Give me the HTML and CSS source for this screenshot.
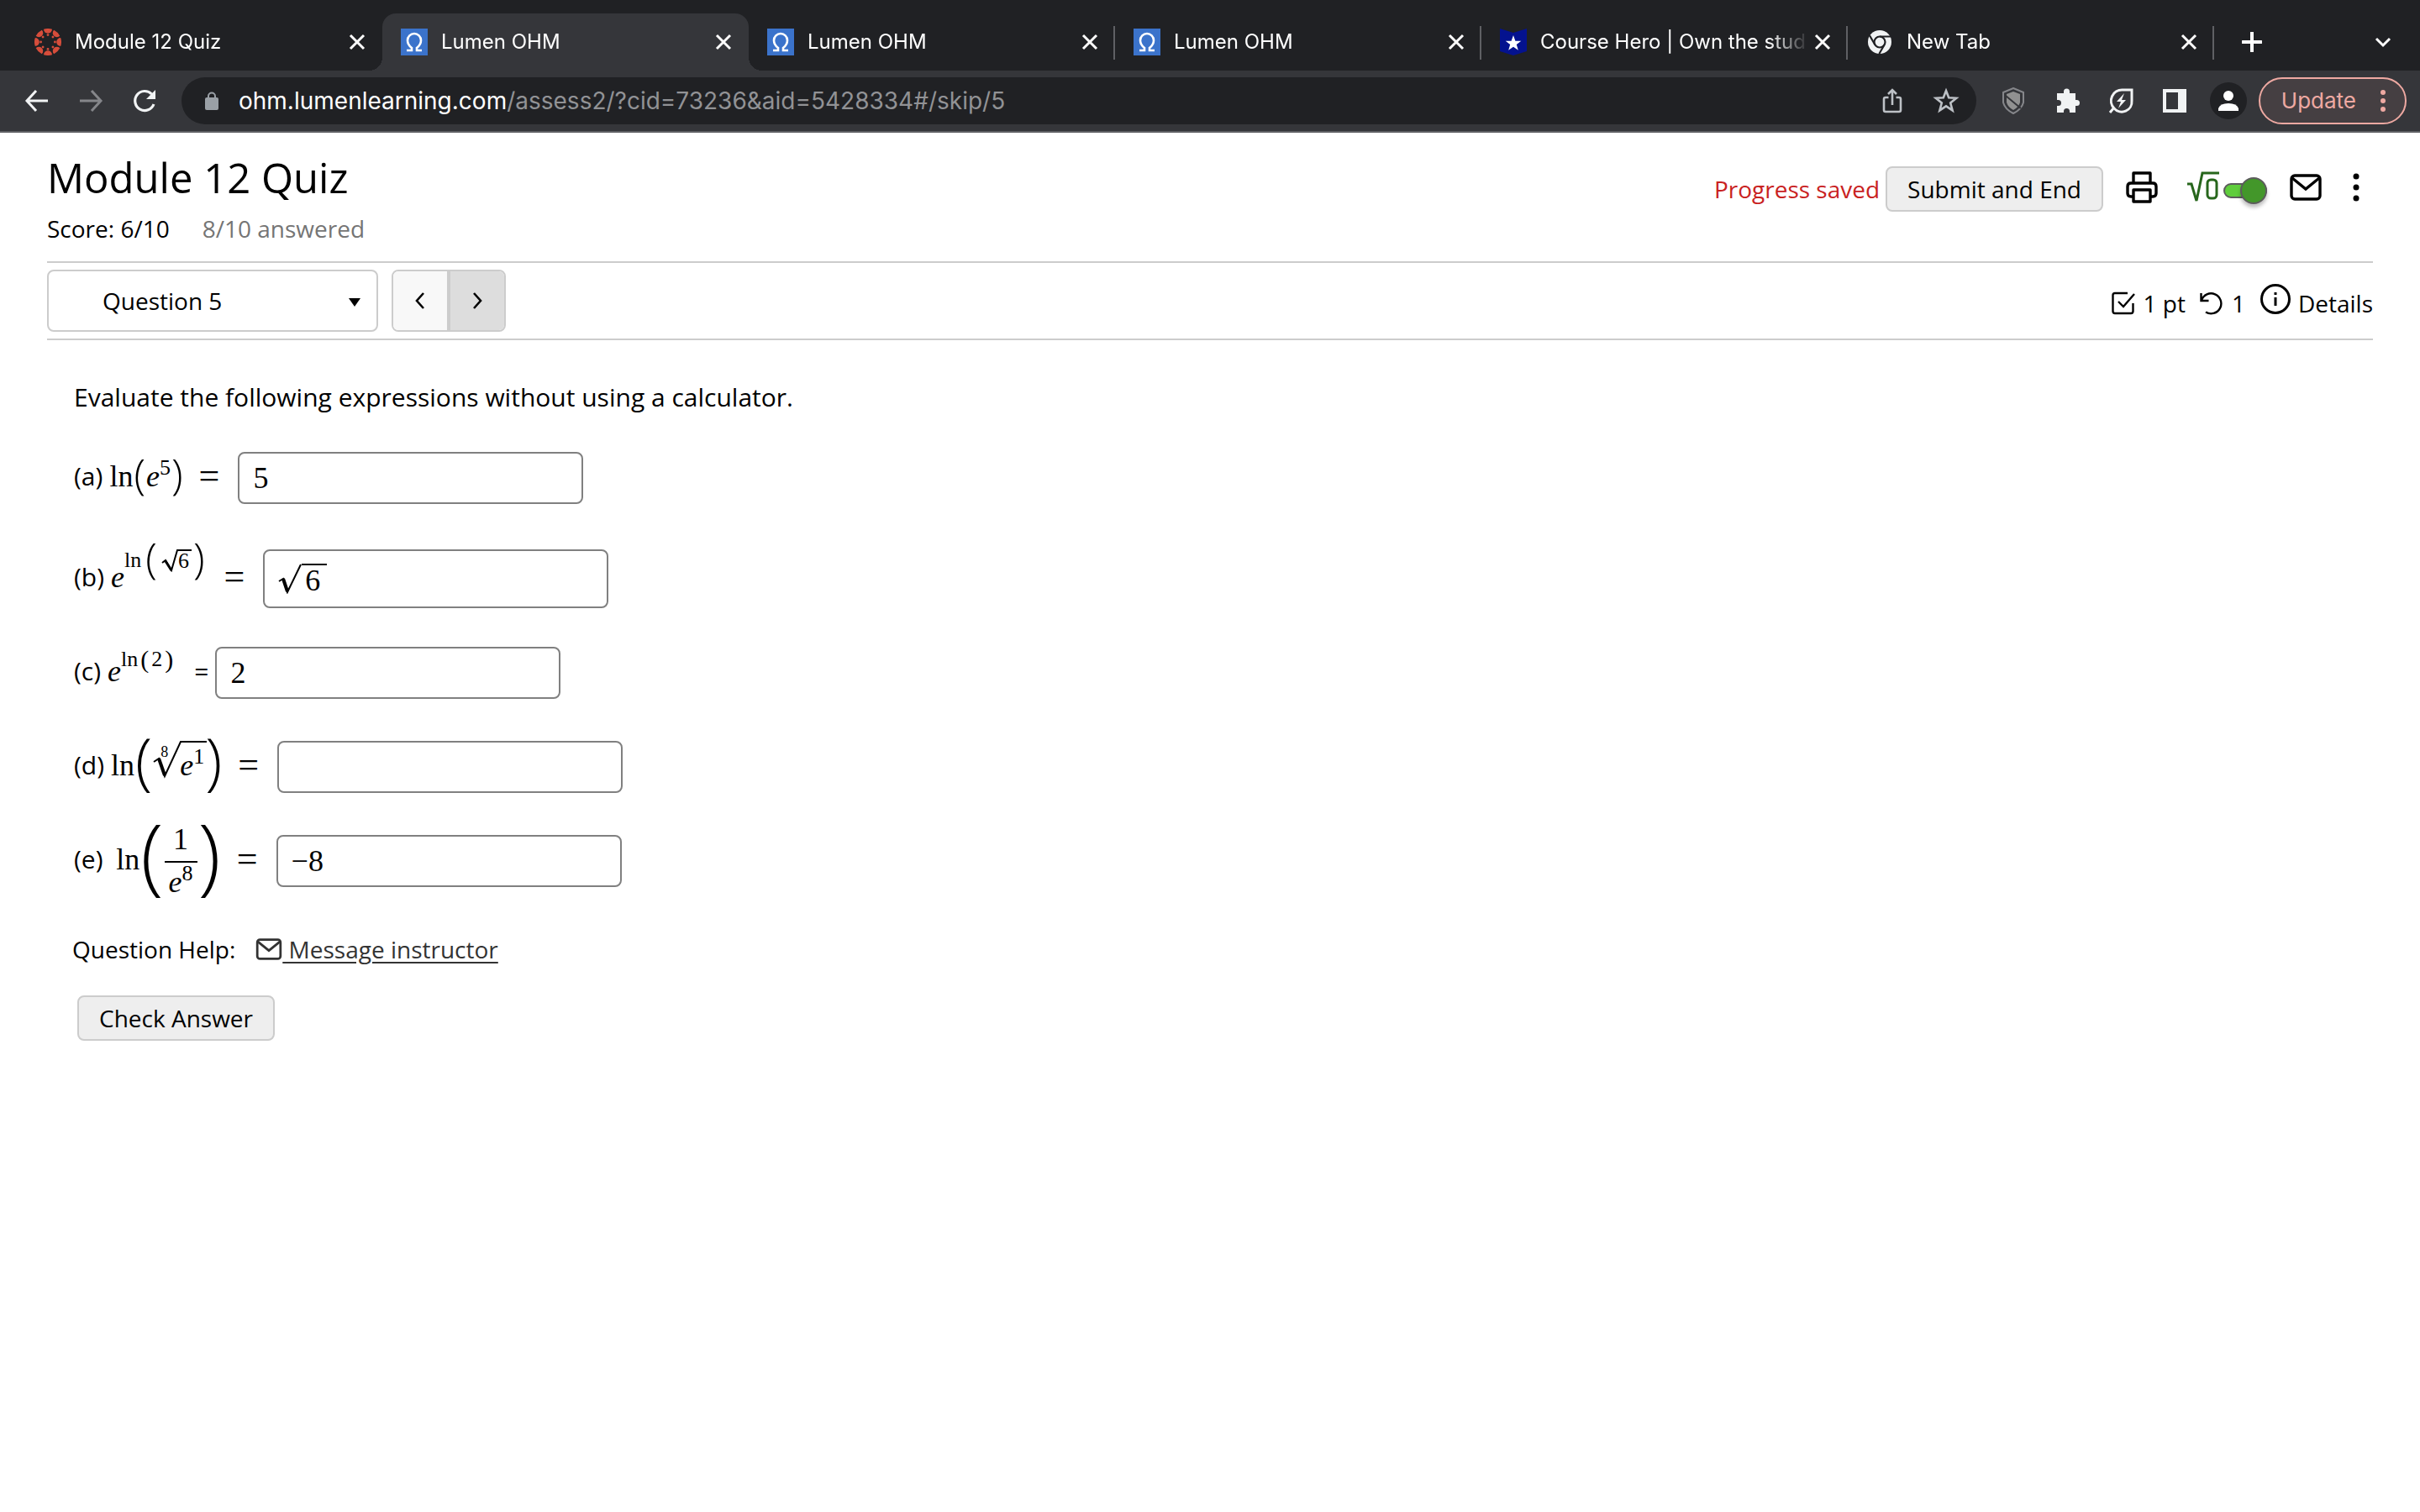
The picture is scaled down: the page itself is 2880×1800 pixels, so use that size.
FILE: index.html
```html
<!DOCTYPE html>
<html lang="en">
    <head>
        <meta charset="UTF-8">
        <meta name="viewport" content="width=device-width, initial-scale=1.0">
        <title>Lumen OHM</title>
        <link rel="stylesheet" href="styles.css">
    </head>
    <body>
        <!-- shared icon shapes -->
        <svg class="defs" width="0" height="0" aria-hidden="true">
            <symbol id="close" viewBox="0 0 20 20">
                <path d="M2 2l16 16M18 2L2 18" fill="none" stroke="#fff" stroke-width="3"/>
            </symbol>
            <symbol id="omega" viewBox="0 0 32 32">
                <rect width="32" height="32" fill="#3b73cb"/>
                <path d="M7 26h6v-3C9 20 8 17 8 14a8 8 0 0 1 16 0c0 3-1 6-5 9v3h6" fill="none" stroke="#fff" stroke-width="2.6"/>
            </symbol>
            <symbol id="mail" viewBox="0 0 38 32">
                <rect x="2" y="2" width="34" height="28" rx="4" fill="none" stroke="currentColor" stroke-width="3.4"/>
                <path d="M3 5l16 13L35 5" fill="none" stroke="currentColor" stroke-width="3.4"/>
            </symbol>
        </svg>

        <div class="browser">
            <div class="tab-strip">
                <div class="tab">
                    <svg class="favicon" viewBox="-16 -16 32 32" fill="#d64d3b">
                        <g id="petals">
                            <path d="M-5-15.2A16 16 0 0 1 5-15.2A5 5 0 0 1-5-15.2z"/>
                            <circle cy="-8.4" r="1.4"/>
                        </g>
                        <use href="#petals" transform="rotate(45)"/>
                        <use href="#petals" transform="rotate(90)"/>
                        <use href="#petals" transform="rotate(135)"/>
                        <use href="#petals" transform="rotate(180)"/>
                        <use href="#petals" transform="rotate(225)"/>
                        <use href="#petals" transform="rotate(270)"/>
                        <use href="#petals" transform="rotate(315)"/>
                    </svg>
                    <span class="tab-title">Module 12 Quiz</span>
                    <button class="tab-close" aria-label="Close tab"><svg><use href="#close"/></svg></button>
                </div>
                <div class="tab active">
                    <svg class="favicon"><use href="#omega"/></svg>
                    <span class="tab-title">Lumen OHM</span>
                    <button class="tab-close" aria-label="Close tab"><svg><use href="#close"/></svg></button>
                </div>
                <div class="tab divided">
                    <svg class="favicon"><use href="#omega"/></svg>
                    <span class="tab-title">Lumen OHM</span>
                    <button class="tab-close" aria-label="Close tab"><svg><use href="#close"/></svg></button>
                </div>
                <div class="tab divided">
                    <svg class="favicon"><use href="#omega"/></svg>
                    <span class="tab-title">Lumen OHM</span>
                    <button class="tab-close" aria-label="Close tab"><svg><use href="#close"/></svg></button>
                </div>
                <div class="tab divided">
                    <svg class="favicon" viewBox="0 0 32 32">
                        <path d="M0 0l16 5 16-5v27l-16 5-16-5z" fill="#04128f"/>
                        <path d="M16 8l2.400 6.700h6.900l-5.500 4.200 2 6.800-5.800-4-5.800 4 2-6.800-5.500-4.200h6.900z" fill="#fff"/>
                    </svg>
                    <span class="tab-title">Course Hero | Own the stud</span>
                    <button class="tab-close" aria-label="Close tab"><svg><use href="#close"/></svg></button>
                </div>
                <div class="tab divided">
                    <svg class="favicon" viewBox="0 0 32 32">
                        <circle cx="16" cy="16" r="14" fill="#f1f3f4"/>
                        <circle cx="16" cy="16" r="6.500" fill="none" stroke="#202124" stroke-width="2.200"/>
                        <path d="M16 9.500h13M10.400 19.300L4 8.200M21.600 19.300L15.400 30" stroke="#202124" stroke-width="2.200"/>
                    </svg>
                    <span class="tab-title">New Tab</span>
                    <button class="tab-close" aria-label="Close tab"><svg><use href="#close"/></svg></button>
                </div>
                <button class="new-tab" aria-label="New tab">
                    <svg viewBox="0 0 24 24"><path d="M12 1v22M1 12h22" stroke="#fff" stroke-width="4" stroke-linecap="round"/></svg>
                </button>
                <button class="tab-search" aria-label="Search tabs">
                    <svg viewBox="0 0 20 20"><path d="M2 6l8 8 8-8" fill="none" stroke="#fff" stroke-width="3"/></svg>
                </button>
            </div>

            <div class="toolbar">
                <button class="tool" aria-label="Back">
                    <svg viewBox="0 0 32 32"><path d="M29 16H4M15 4L4 16l11 12" fill="none" stroke="#f1f3f4" stroke-width="3"/></svg>
                </button>
                <button class="tool" aria-label="Forward">
                    <svg viewBox="0 0 32 32"><path d="M3 16h25M17 4l11 12-11 12" fill="none" stroke="#85868a" stroke-width="3"/></svg>
                </button>
                <button class="tool" aria-label="Reload">
                    <svg viewBox="0 0 32 32"><path d="M27 20a11.500 11.500 0 1 1-2.500-12" fill="none" stroke="#f1f3f4" stroke-width="3.200"/><path d="M29 3v11H18z" fill="#f1f3f4"/></svg>
                </button>
                <div class="address">
                    <svg class="lock" viewBox="0 0 16 22"><path d="M4 9V5.500a4 4 0 0 1 8 0V9" fill="none" stroke="#9aa0a6" stroke-width="2"/><rect y="7" width="16" height="15" rx="2" fill="#9aa0a6"/></svg>
                    <div class="url">ohm.lumenlearning.com<span>/assess2/?cid=73236&amp;aid=5428334#/skip/5</span></div>
                    <button class="tool" aria-label="Share">
                        <svg viewBox="0 0 32 32"><path d="M11.500 12H8q-2 0-2 2v13q0 2 2 2h16q2 0 2-2V14q0-2-2-2h-3.500M16 21V4M11 8l5-5 5 5" fill="none" stroke="#bdc1c6" stroke-width="2.600"/></svg>
                    </button>
                    <button class="tool" aria-label="Bookmark">
                        <svg viewBox="0 0 32 32"><path d="M16 4l3.200 8.300 9 .5-7 5.700 2.400 8.900L16 22.300l-7.600 5.100 2.400-8.900-7-5.700 9-.5z" fill="none" stroke="#bdc1c6" stroke-width="2.600"/></svg>
                    </button>
                </div>
                <div class="extensions">
                    <button class="tool" aria-label="Shield">
                        <svg viewBox="0 0 32 32"><path d="M16 1l12 5v12q-2 8-12 13Q6 26 4 18V6z" fill="none" stroke="#85868a" stroke-width="2"/><path d="M16 5l8 3v10q-2 6-8 9-6-3-8-9V8z" fill="#919191"/><path d="M7 10l18 15" stroke="#35363a" stroke-width="2"/></svg>
                    </button>
                    <button class="tool" aria-label="Extensions">
                        <svg viewBox="0 0 32 32"><path d="M4 7h8V5a3.500 3.500 0 0 1 7 0v2h7v8h1.500a3.500 3.500 0 0 1 0 7H26v8h-7v-1.500a3.500 3.500 0 0 0-7 0V30H4v-8h1.500a3.500 3.500 0 0 0 0-7H4z" fill="#f1f3f4"/></svg>
                    </button>
                    <button class="tool" aria-label="Energy saver">
                        <svg viewBox="0 0 32 32"><path d="M29 3H18A13 13 0 0 0 8 25a12 12 0 0 0 21-9zM8 24l-5 6" fill="none" stroke="#f1f3f4" stroke-width="3"/><path d="M20 7l-9 10h5l-3 8 9-10h-5z" fill="#f1f3f4"/></svg>
                    </button>
                    <button class="tool" aria-label="Side panel">
                        <svg viewBox="0 0 32 32"><path d="M2 2h28v28H2zM6 6v20h14V6z" fill="#f1f3f4" fill-rule="evenodd"/></svg>
                    </button>
                    <button class="tool profile" aria-label="Profile">
                        <svg viewBox="0 0 44 44"><circle cx="22" cy="22" r="22" fill="#202124"/><circle cx="22" cy="16" r="6" fill="#fff"/><path d="M10 34v-3q2-6 12-6t12 6v3z" fill="#fff"/></svg>
                    </button>
                </div>
                <button class="update">
                    Update
                    <svg viewBox="0 0 8 28" fill="#eea9a2"><circle cx="4" cy="4" r="3"/><circle cx="4" cy="14" r="3"/><circle cx="4" cy="24" r="3"/></svg>
                </button>
            </div>
        </div>

        <div class="page">
            <header class="quiz-header">
                <div>
                    <h1>Module 12 Quiz</h1>
                    <div class="score">
                        <span>Score: 6/10</span>
                        <span class="answered">8/10 answered</span>
                    </div>
                </div>
                <div class="header-actions">
                    <span class="saved">Progress saved</span>
                    <button class="button">Submit and End</button>
                    <button class="icon-button print" aria-label="Print">
                        <svg viewBox="0 0 38 38" fill="none" stroke="#000" stroke-width="3.400" stroke-linejoin="round"><path d="M9 14V2h20v12M9 30H6q-4 0-4-4v-8q0-4 4-4h26q4 0 4 4v8q0 4-4 4h-3"/><path d="M9 22h20v14H9z"/></svg>
                    </button>
                    <label class="equation-toggle" aria-label="Equation editor">
                        <svg viewBox="0 0 38 38" fill="none" stroke="#27661c" stroke-width="3"><path d="M0 15h5l6 20L18 2h20"/><rect x="24" y="10" width="11" height="22" rx="4"/></svg>
                        <input type="checkbox" checked>
                    </label>
                    <button class="icon-button message" aria-label="Messages"><svg><use href="#mail"/></svg></button>
                    <button class="icon-button more" aria-label="More options">
                        <svg viewBox="0 0 8 36"><circle cx="4" cy="5" r="3.500"/><circle cx="4" cy="18" r="3.500"/><circle cx="4" cy="31" r="3.500"/></svg>
                    </button>
                </div>
            </header>

            <nav class="question-nav">
                <div class="question-select">
                    <select aria-label="Question">
                        <option>Question 5</option>
                    </select>
                    <svg viewBox="0 0 16 12"><path d="M1 1h14l-7 10z"/></svg>
                </div>
                <div class="pager">
                    <button aria-label="Previous question"><svg viewBox="0 0 12 20"><path d="M10 1L2 10l8 9" fill="none" stroke="#000" stroke-width="2.600"/></svg></button>
                    <button class="next" aria-label="Next question"><svg viewBox="0 0 12 20"><path d="M2 1l8 9-8 9" fill="none" stroke="#000" stroke-width="2.600"/></svg></button>
                </div>
                <div class="question-info">
                    <svg class="small" viewBox="0 0 28 28" fill="none" stroke="#000" stroke-width="2.400"><path d="M19 2H4Q1.500 2 1.500 4.500v19Q1.500 26 4 26h19q2.500 0 2.500-2.500V14M8 12l6 6L27 3"/></svg>
                    <span>1 pt</span>
                    <svg class="small" viewBox="0 0 28 28" fill="none" stroke="#000" stroke-width="2.400"><path d="M1.500 2v9h9M2 10.500A12 12 0 1 1 7 24.500"/></svg>
                    <span>1</span>
                    <button class="details">
                        <svg viewBox="0 0 38 38" fill="none" stroke="#000" stroke-width="3"><circle cx="19" cy="19" r="16.500"/><path d="M19 17v10M19 11v3"/></svg>
                        Details
                    </button>
                </div>
            </nav>

            <main class="question">
                <p class="prompt">Evaluate the following expressions without using a calculator.</p>

                <div class="parts">
                    <div class="part">
                        <label for="answer-a">(a) <span class="math"><span>ln</span><span class="paren">(</span><i>e</i><sup>5</sup><span class="paren">)</span><span class="equals">=</span></span></label>
                        <input id="answer-a" class="answer" type="text" value="5">
                    </div>

                    <div class="part">
                        <label for="answer-b">(b) <span class="math"><i>e</i><span class="exponent high"><span>ln</span><span class="paren">(</span><svg class="radical" viewBox="0 0 36 28"><path d="M1 17l4-3 7 12L19 2h17" fill="none" stroke="#000" stroke-width="2"/><path d="M5 15l7 11" stroke="#000" stroke-width="3"/></svg><span class="radicand">6</span><span class="paren">)</span></span><span class="equals">=</span></span></label>
                        <div class="answer root-answer">
                            <svg viewBox="0 0 28 36"><path d="M1 21l5-3 5 16L27 1" fill="none" stroke="#000" stroke-width="2"/><path d="M6 18l5 15" stroke="#000" stroke-width="4"/></svg>
                            <input id="answer-b" type="text" value="6">
                        </div>
                    </div>

                    <div class="part">
                        <label for="answer-c">(c) <span class="math"><i>e</i><span class="exponent"><span>ln</span><span class="thin">(</span><span>2</span><span class="thin">)</span></span></span><span class="plain-equals">=</span></label>
                        <input id="answer-c" class="answer" type="text" value="2">
                    </div>

                    <div class="part">
                        <label for="answer-d">(d) <span class="math"><span>ln</span><span class="paren medium">(</span><span class="root"><svg viewBox="0 0 64 46"><path d="M1 26l6-4 7 21L33 2h31" fill="none" stroke="#000" stroke-width="2"/><path d="M7 22l7 20" stroke="#000" stroke-width="4"/></svg><small>8</small><i>e</i><sup>1</sup></span><span class="paren medium">)</span><span class="equals">=</span></span></label>
                        <input id="answer-d" class="answer" type="text">
                    </div>

                    <div class="part">
                        <label for="answer-e">(e)&nbsp; <span class="math"><span>ln</span><span class="paren large">(</span><span class="fraction"><span class="top">1</span><span class="bottom"><i>e</i><sup>8</sup></span></span><span class="paren large">)</span><span class="equals">=</span></span></label>
                        <input id="answer-e" class="answer" type="text" value="−8">
                    </div>
                </div>

                <div class="help">
                    <span>Question Help:</span>
                    <a href="#message"><svg><use href="#mail"/></svg>&nbsp;Message instructor</a>
                </div>

                <button class="button check">Check Answer</button>
            </main>
        </div>
    </body>
</html>
```
FILE: styles.css
```css
* {
    box-sizing: border-box;
}

body {
    margin: 0;
    background-color: #fff;
    color: #000;
    font-family: "Open Sans", "Noto Sans", sans-serif;
    font-size: 28px;
    line-height: 40px;
}

button {
    padding: 0;
    border: none;
    background: none;
    color: inherit;
    font: inherit;
    cursor: pointer;
}

svg {
    display: block;
    flex: none;
}

.defs {
    position: absolute;
}

/* Browser window */

.browser {
    background-color: #202124;
    border-bottom: 2px solid #5f6064;
    color: #fff;
    font-family: Inter, "Liberation Sans", sans-serif;
}

.tab-strip {
    display: flex;
    align-items: flex-end;
    height: 84px;
    padding-left: 19px;
}

.tab {
    position: relative;
    display: flex;
    align-items: center;
    flex: 0 1 436px;
    min-width: 0;
    height: 68px;
    padding: 0 20px 0 22px;
    font-size: 24px;
}

.tab.active {
    background-color: #35363a;
    border-radius: 16px 16px 0 0;
}

.tab.active::before,
.tab.active::after {
    content: "";
    position: absolute;
    bottom: 0;
    width: 16px;
    height: 16px;
}

.tab.active::before {
    right: 100%;
    background: radial-gradient(circle at 0 0, transparent 16px, #35363a 16px);
}

.tab.active::after {
    left: 100%;
    background: radial-gradient(circle at 100% 0, transparent 16px, #35363a 16px);
}

.tab.divided::after {
    content: "";
    position: absolute;
    right: 0;
    top: 15px;
    width: 2px;
    height: 40px;
    background-color: #5f6064;
}

.favicon {
    width: 32px;
    height: 32px;
    margin-right: 16px;
}

.tab-title {
    flex: 1;
    white-space: nowrap;
    mask-image: linear-gradient(to right, #000 85%, transparent);
}

.tab-close {
    margin-left: 6px;
}

.tab-close svg {
    width: 20px;
    height: 20px;
}

.new-tab {
    height: 68px;
    margin-left: 33px;
}

.new-tab svg {
    width: 24px;
    height: 24px;
}

.tab-search {
    height: 68px;
    margin-left: auto;
    margin-right: 34px;
}

.tab-search svg {
    width: 20px;
    height: 20px;
}

.toolbar {
    display: flex;
    align-items: center;
    gap: 32px;
    height: 72px;
    padding: 0 16px 0 28px;
    background-color: #35363a;
}

.tool svg {
    width: 32px;
    height: 32px;
}

.address {
    display: flex;
    align-items: center;
    flex: 1;
    gap: 32px;
    height: 56px;
    margin-left: -4px;
    padding: 0 20px 0 28px;
    border-radius: 28px;
    background-color: #202124;
}

.lock {
    width: 16px;
    height: 22px;
    margin-right: -8px;
}

.url {
    flex: 1;
    font-size: 28px;
    white-space: nowrap;
}

.url span {
    color: #919295;
}

.extensions {
    display: flex;
    align-items: center;
    gap: 32px;
    margin-left: -4px;
}

.tool.profile {
    margin: 0 -6px;
}

.profile svg {
    width: 44px;
    height: 44px;
}

.update {
    display: flex;
    align-items: center;
    gap: 28px;
    height: 56px;
    margin-left: -12px;
    padding: 0 22px 0 25px;
    border: 2px solid #eea9a2;
    border-radius: 28px;
    background-color: #453f42;
    color: #eea9a2;
    font-size: 26px;
}

.update svg {
    width: 8px;
    height: 28px;
}

/* Quiz header */

.page {
    padding: 0 56px;
}

.quiz-header {
    display: flex;
    justify-content: space-between;
    align-items: flex-start;
    padding: 20px 0 19px;
    border-bottom: 2px solid #ccc;
}

h1 {
    margin: 0 0 8px;
    font-size: 49px;
    font-weight: normal;
    line-height: 66px;
}

.score {
    display: flex;
    gap: 39px;
}

.answered {
    color: #757575;
}

.header-actions {
    display: flex;
    align-items: center;
    padding-top: 20px;
}

.saved {
    color: #c9221f;
}

.button {
    height: 54px;
    padding: 0 24px;
    border: 2px solid #ccc;
    border-radius: 8px;
    background-color: #eee;
}

.header-actions .button {
    margin-left: 7px;
    margin-right: 27px;
}

.print svg,
.equation-toggle svg {
    width: 38px;
    height: 38px;
}

.icon-button {
    padding-bottom: 4px;
}

.message svg {
    width: 38px;
    height: 32px;
}

.more svg {
    width: 8px;
    height: 36px;
}

.equation-toggle {
    display: flex;
    align-items: center;
    margin: 0 27px 0 35px;
}

.equation-toggle svg {
    margin-bottom: 4px;
}

.equation-toggle input {
    position: relative;
    appearance: none;
    width: 52px;
    height: 18px;
    margin: 3px 0 0 5px;
    border: 2px solid #5c5c5c;
    border-radius: 9px;
    background-color: #5fcd3c;
}

.equation-toggle input::before {
    content: "";
    position: absolute;
    top: -9px;
    right: -2px;
    width: 32px;
    height: 32px;
    border: 2px solid #5c5c5c;
    border-radius: 50%;
    background-color: #43972a;
    box-shadow: 0 4px 4px rgba(0, 0, 0, 0.25);
    box-sizing: border-box;
}

.more {
    margin-left: 37px;
    margin-right: 16px;
}

/* Question navigation */

.question-nav {
    display: flex;
    align-items: center;
    padding: 8px 0;
    border-bottom: 2px solid #ccc;
}

.question-select {
    position: relative;
    width: 394px;
}

.question-select select {
    appearance: none;
    width: 100%;
    height: 74px;
    padding: 0 64px;
    border: 2px solid #ccc;
    border-radius: 8px;
    background-color: #fff;
    color: #000;
    font: inherit;
}

.question-select svg {
    position: absolute;
    top: 33px;
    right: 20px;
    width: 16px;
    height: 12px;
    pointer-events: none;
}

.pager {
    display: flex;
    height: 74px;
    margin-left: 16px;
    border: 2px solid #ccc;
    border-radius: 8px;
    overflow: hidden;
}

.pager button {
    width: 64px;
    background-color: #f8f8f8;
}

.pager .next {
    width: 68px;
    border-left: 4px solid #ccc;
    background-color: #ddd;
}

.pager svg {
    width: 12px;
    height: 20px;
    margin: 0 auto;
}

.question-info {
    display: flex;
    align-items: center;
    gap: 10px;
    margin-left: auto;
    padding-top: 6px;
}

.question-info .small {
    width: 28px;
    height: 28px;
}

.question-info span {
    margin-right: 7px;
}

.details {
    display: flex;
    align-items: center;
    gap: 8px;
}

.details svg {
    width: 38px;
    height: 38px;
    margin-bottom: 10px;
}

/* Question body */

.question {
    padding: 48px 30px;
}

.prompt {
    margin: 0 2px 20px;
    font-size: 30px;
}

.part {
    display: flex;
    align-items: center;
    min-height: 112px;
    margin-left: 2px;
    font-size: 30px;
}

.part:first-child {
    padding-bottom: 8px;
    min-height: 120px;
}

.part label {
    display: flex;
    align-items: center;
    gap: 8px;
    padding-bottom: 4px;
}

.math {
    display: flex;
    align-items: center;
    font-family: "Liberation Serif", serif;
    font-size: 36px;
    line-height: 36px;
}

.math sup {
    padding-bottom: 20px;
    font-size: 26px;
    line-height: 26px;
}

/* tall brackets use the light sans face so the stroke stays thin */
.paren {
    margin: 0 1px;
    padding-bottom: 6px;
    font-family: "Open Sans", sans-serif;
    font-size: 50px;
    font-weight: 300;
}

.paren.medium {
    padding-bottom: 14px;
    font-size: 74px;
}

.paren.large {
    padding-bottom: 18px;
    font-size: 100px;
}

.equals {
    margin: 0 22px 0 18px;
    font-size: 44px;
}

.plain-equals {
    margin: 0 8px 0 14px;
}

.exponent {
    display: flex;
    align-items: center;
    padding-bottom: 28px;
    font-size: 26px;
    line-height: 26px;
}

.exponent.high {
    padding-bottom: 40px;
}

.exponent .paren {
    margin: 0 5px;
}

.exponent .thin {
    padding: 0 3px;
    font-size: 30px;
}

.radical {
    width: 36px;
    height: 28px;
    margin-right: -16px;
}

.radicand {
    padding-top: 2px;
}

.root {
    position: relative;
    display: flex;
    align-items: center;
    padding-left: 32px;
}

.root svg {
    position: absolute;
    left: 0;
    top: -7px;
    width: 64px;
    height: 46px;
}

.root small {
    position: absolute;
    left: 9px;
    top: -2px;
    font-size: 18px;
    line-height: 18px;
}

.fraction {
    display: flex;
    flex-direction: column;
    align-items: center;
}

.fraction .top {
    width: 39px;
    padding-bottom: 6px;
    border-bottom: 2px solid #000;
    line-height: 40px;
    text-align: center;
}

.fraction .bottom {
    display: flex;
    align-items: center;
    height: 41px;
    padding-top: 5px;
}

.answer {
    width: 411px;
    height: 62px;
    padding: 0 16px;
    border: 2px solid #808080;
    border-radius: 8px;
    background-color: #fff;
    font-family: "Liberation Serif", serif;
    font-size: 36px;
}

.root-answer {
    display: flex;
    align-items: center;
    height: 70px;
}

.root-answer svg {
    width: 28px;
    height: 36px;
}

.root-answer input {
    width: 30px;
    height: 36px;
    padding: 2px 4px 0;
    border: none;
    border-top: 2px solid #000;
    background: none;
    font: inherit;
}

.help {
    display: flex;
    gap: 24px;
    margin-top: 29px;
}

.help a {
    display: flex;
    align-items: center;
    color: #333;
    text-underline-offset: 4px;
}

.help svg {
    width: 32px;
    height: 26px;
}

.check {
    margin: 35px 6px 0;
}
```
